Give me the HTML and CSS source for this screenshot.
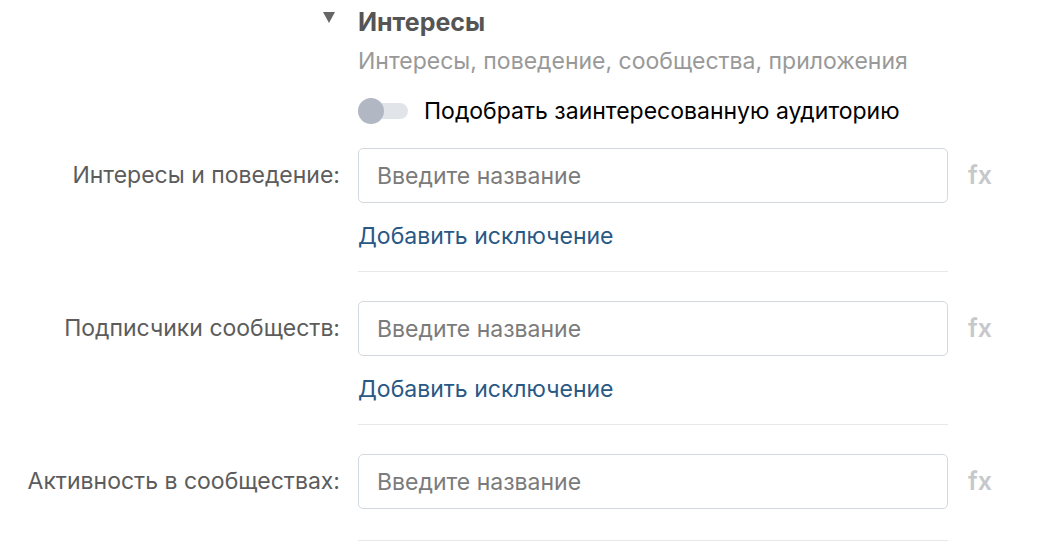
FILE: index.html
```html
<!DOCTYPE html>
<html lang="ru">
<head>
    <meta charset="UTF-8">
    <title>Интересы</title>
    <link rel="stylesheet" href="styles.css">
</head>
<body>
    <div class="section">
        <div class="section-head">
            <span class="caret"></span>
            <div class="head-text">
                <h2>Интересы</h2>
                <p class="subtitle">Интересы, поведение, сообщества, приложения</p>
                <label class="switch">
                    <span class="switch-track"><span class="switch-knob"></span></span>
                    <span>Подобрать заинтересованную аудиторию</span>
                </label>
            </div>
        </div>

        <div class="field with-link">
            <div class="field-label">Интересы и поведение:</div>
            <div class="field-control">
                <input type="text" placeholder="Введите название">
                <a href="#" class="exclude">Добавить исключение</a>
            </div>
            <div class="fx">fx</div>
        </div>

        <div class="field with-link">
            <div class="field-label">Подписчики сообществ:</div>
            <div class="field-control">
                <input type="text" placeholder="Введите название">
                <a href="#" class="exclude">Добавить исключение</a>
            </div>
            <div class="fx">fx</div>
        </div>

        <div class="field">
            <div class="field-label">Активность в сообществах:</div>
            <div class="field-control">
                <input type="text" placeholder="Введите название">
            </div>
            <div class="fx">fx</div>
        </div>
    </div>
</body>
</html>
```

FILE: styles.css
```css
* {
    margin: 0;
    padding: 0;
    box-sizing: border-box;
}

body {
    font-family: 'Inter', 'Liberation Sans', sans-serif;
    font-size: 23px;
    background: white;
    color: #000;
}

.section-head {
    display: grid;
    grid-template-columns: 340px 590px;
    column-gap: 18px;
    padding-top: 6px;
}

.caret {
    justify-self: end;
    margin-top: 6px;
    margin-right: 5px;
    width: 0;
    height: 0;
    border-left: 6px solid transparent;
    border-right: 6px solid transparent;
    border-top: 11px solid #666;
}

h2 {
    font-size: 25px;
    font-weight: 700;
    color: #555;
    line-height: 32px;
}

.subtitle {
    color: #999;
    line-height: 30px;
    margin-top: 8px;
}

.switch {
    display: flex;
    align-items: center;
    gap: 16px;
    margin-top: 17px;
    line-height: 36px;
}

.switch-track {
    position: relative;
    width: 50px;
    height: 16px;
    border-radius: 8px;
    background: #e1e4e9;
}

.switch-knob {
    position: absolute;
    left: 0;
    top: -5px;
    width: 26px;
    height: 26px;
    border-radius: 50%;
    background: #b1b8c3;
}

.field {
    display: grid;
    grid-template-columns: 340px 590px auto;
    column-gap: 18px;
    align-items: start;
}

.section-head + .field {
    margin-top: 19px;
}

.field + .field {
    margin-top: 29px;
}

.field-label {
    text-align: right;
    color: #5c5c5c;
    line-height: 55px;
}

.field-control {
    display: flex;
    flex-direction: column;
    align-items: flex-start;
    padding-bottom: 31px;
    border-bottom: 1px solid #e7e8ec;
}

.with-link .field-control {
    padding-bottom: 23px;
}

input {
    width: 100%;
    height: 55px;
    padding: 0 18px;
    border: 1px solid #d3d9de;
    border-radius: 5px;
    font-family: inherit;
    font-size: 23px;
    color: #000;
    outline: none;
}

input::placeholder {
    color: #7b7b7b;
}

.exclude {
    margin-top: 21px;
    line-height: 24px;
    color: #2a5885;
    text-decoration: none;
}

.fx {
    margin-left: 2px;
    line-height: 55px;
    font-weight: 600;
    font-size: 25px;
    color: #c6c8cb;
}
```
